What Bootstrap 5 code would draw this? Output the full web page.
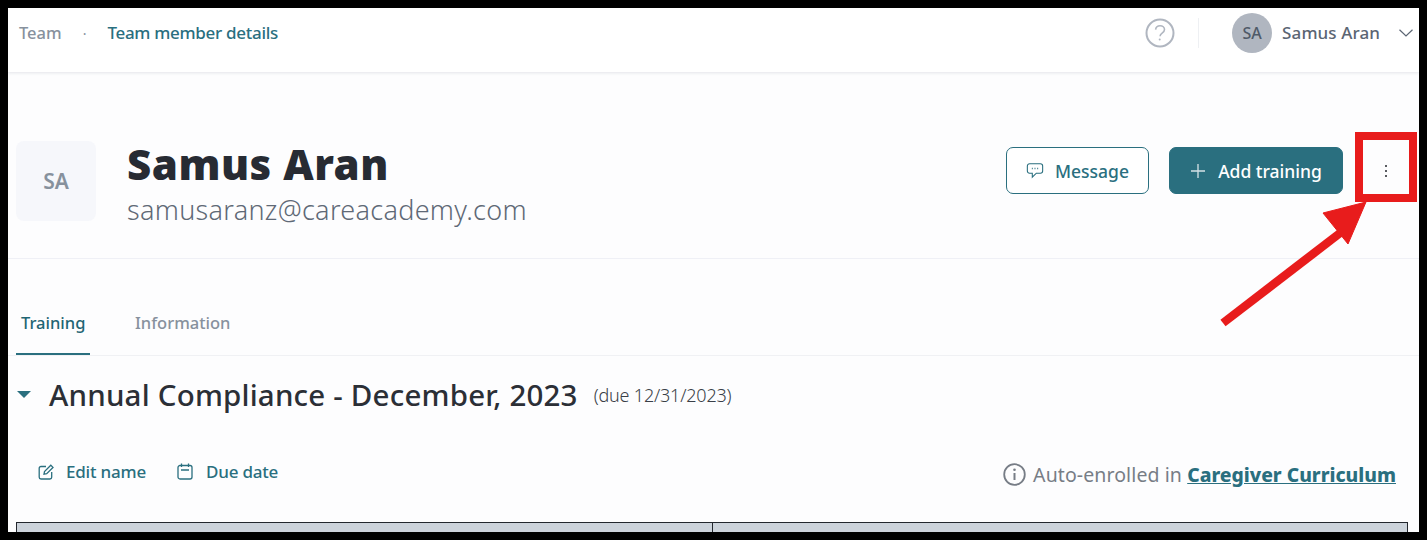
<!DOCTYPE html>
<html lang="en">
<head>
    <meta charset="UTF-8">
    <meta name="viewport" content="width=device-width, initial-scale=1">
    <title>Team member details</title>
    <link href="https://cdn.jsdelivr.net/npm/bootstrap@5.3.0/dist/css/bootstrap.min.css" rel="stylesheet">
    <style>
        html, body { height: 100%; overflow: hidden; }
        body { background: #000; padding: 8px; font-family: "Noto Sans", "Open Sans", sans-serif; color: #2b2f36; }
        .screen { position: relative; height: 524px; background: #fdfdfe; overflow: hidden; }
        .topbar { height: 64px; padding: 0 6px 14px 11px; background: #fff; box-shadow: 0 1px 3px rgba(40, 50, 80, .12); }
        .crumb-root { color: #87919d; font-size: 16.5px; font-weight: 500; }
        .crumb-dot { color: #87919d; font-size: 14px; margin: 0 21px 0 21px; }
        .crumb-here { color: #2a6f7f; font-size: 17px; font-weight: 500; letter-spacing: -.3px; }
        .help-wrap { padding-right: 23px; margin-right: 33px; border-right: 1px solid #eef0f3; height: 30px; }
        .user-circle { width: 40px; height: 40px; background: #b0b6c0; color: #4f5a68; font-size: 16px; font-weight: 500; }
        .user-name { color: #5b6573; font-size: 17px; font-weight: 500; margin: 0 19px 0 10px; letter-spacing: .1px; }
        .profile-head { height: 187px; padding: 69px 31px 0 8px; border-bottom: 1px solid #eff0f6; }
        .initials-box { width: 80px; height: 80px; background: #f6f7fb; color: #87919d; border-radius: 8px; font-size: 21px; font-weight: 600; margin-right: 31px; padding-top: 2px; }
        .member-name { font-size: 42px; font-weight: 900; line-height: 45px; margin: 0; color: #272b33; letter-spacing: .5px; }
        .member-mail { font-size: 27px; font-weight: 300; line-height: 40px; margin-top: 4px; color: #5f6976; letter-spacing: .3px; }
        .head-actions { height: 47px; margin-top: 6px; }
        .head-btn { height: 47px; font-size: 17.5px; font-weight: 500; border-radius: 7px; display: inline-flex; align-items: center; padding-top: 8px; }
        .head-btn svg { margin-top: -2px; }
        .btn-msg { width: 143px; color: #2a6f7f; background: #fff; border: 1px solid #2a6f7f; margin-right: 20px; }
        .btn-msg svg { margin-right: 3px; }
        .btn-msg:hover { color: #2a6f7f; background: #fff; border-color: #2a6f7f; }
        .btn-add { width: 174px; color: #fff; background: #2a6f7f; border: 1px solid #2a6f7f; }
        .btn-add:hover { color: #fff; background: #2a6f7f; border-color: #2a6f7f; }
        .kebab { width: 3px; margin-left: 42px; }
        .kebab span { display: block; width: 2px; height: 2px; background: #22262c; border-radius: 50%; margin: 3px 0; }
        .tab-strip { height: 97px; padding: 0 8px; border-bottom: 1px solid #f0f1f4; align-items: flex-end; }
        .tab-item { font-size: 16.5px; font-weight: 500; color: #87919d; height: 66px; padding-top: 24px; display: block; text-decoration: none; line-height: 1.2; border-bottom: 2px solid transparent; }
        .tab-on { color: #1f6573; width: 74px; padding-left: 5px; padding-right: 5px; border-bottom-color: #2a6f7f; }
        .tab-off { margin-left: 45px; }
        .section-head { padding: 17px 0 0 9px; height: 60px; }
        .caret-down { width: 0; height: 0; border-left: 7px solid transparent; border-right: 7px solid transparent; border-top: 7px solid #2a6f7f; margin-right: 18px; margin-top: -1px; }
        .section-title { font-size: 29.5px; font-weight: 500; line-height: 38px; margin: 0; color: #2b2f36; letter-spacing: .2px; }
        .section-due { font-size: 18px; font-weight: 300; color: #3a3f47; margin-left: 16px; margin-top: 1px; letter-spacing: -.2px; }
        .action-row { height: 106px; padding: 43px 23px 0 30px; }
        .act-link { color: #2a6f7f; font-size: 17px; font-weight: 500; text-decoration: none; display: inline-flex; align-items: center; letter-spacing: -.2px; }
        .act-link svg { margin-right: 12px; }
        .act-two { margin-left: 31px; }
        .act-two svg { margin-right: 13px; }
        .enrolled { color: #777d86; font-size: 19.5px; margin-top: 1px; letter-spacing: .1px; }
        .enrolled a { color: #2a6f7f; font-weight: 800; font-size: 19.3px; letter-spacing: 0; }
        .enrolled svg { margin-right: 7px; }
        .grid-wrap { padding: 0 11px 0 8px; }
        .grid-wrap .table { margin: 0; }
        .grid-wrap th { background: #ccd3db; height: 40px; width: 50%; border: 1px solid #23272e; padding: 0; }
        .note-box { position: absolute; left: 1347px; top: 124px; width: 62px; height: 70px; border: 8px solid #e81c1c; }
        .note-arrow { position: absolute; left: 1205px; top: 192px; }
    </style>
</head>
<body>
    <div class="screen">
        <header class="topbar d-flex align-items-center justify-content-between">
            <div class="d-flex align-items-center">
                <span class="crumb-root">Team</span>
                <span class="crumb-dot">·</span>
                <span class="crumb-here">Team member details</span>
            </div>
            <div class="d-flex align-items-center">
                <div class="help-wrap d-flex align-items-center">
                    <svg width="30" height="30" viewBox="0 0 30 30" fill="none" stroke="#b0b6c0">
                        <circle cx="15" cy="15" r="13.5" stroke-width="2"/>
                        <path d="M10.6 11.6c.3-2.5 2.2-3.9 4.5-3.9 2.5 0 4.4 1.6 4.4 3.8 0 1.800-1.100 2.700-2.400 3.600-1.300.9-2 1.600-2 3.100" stroke-width="1.600"/>
                        <circle cx="14.700" cy="21.500" r="1" fill="#b0b6c0" stroke="none"/>
                    </svg>
                </div>
                <div class="user-circle rounded-circle d-flex align-items-center justify-content-center">SA</div>
                <span class="user-name">Samus Aran</span>
                <svg width="14" height="8" viewBox="0 0 14 8" fill="none" stroke="#5b6573" stroke-width="1.200"><path d="M.5.8 7 7l6.500-6.200"/></svg>
            </div>
        </header>

        <section class="profile-head d-flex justify-content-between">
            <div class="d-flex">
                <div class="initials-box d-flex align-items-center justify-content-center">SA</div>
                <div>
                    <h1 class="member-name">Samus Aran</h1>
                    <div class="member-mail">samusaranz@careacademy.com</div>
                </div>
            </div>
            <div class="head-actions d-flex align-items-center">
                <button class="btn head-btn btn-msg justify-content-center gap-2" type="button">
                    <svg width="18" height="17" viewBox="0 0 20 18" fill="none" stroke="#2a6f7f" stroke-width="1.200">
                        <path d="M4 1.500h12c1.400 0 2.500 1.100 2.500 2.500v5.500c0 1.400-1.100 2.500-2.500 2.500h-4.500L7 16.500V12H4c-1.400 0-2.500-1.100-2.500-2.500V4C1.500 2.600 2.600 1.500 4 1.500z"/>
                        <path d="M6.500 6.800h1M9.500 6.800h1M12.500 6.800h1" stroke-width="1.500"/>
                    </svg>
                    Message
                </button>
                <button class="btn head-btn btn-add justify-content-center gap-2" type="button">
                    <svg class="me-1" width="16" height="16" viewBox="0 0 16 16" fill="none" stroke="#d5e2e6" stroke-width="1.300"><path d="M8 1v14M1 8h14"/></svg>
                    Add training
                </button>
                <div class="kebab"><span></span><span></span><span></span></div>
            </div>
        </section>

        <nav class="tab-strip d-flex">
            <a class="tab-item tab-on" href="#">Training</a>
            <a class="tab-item tab-off" href="#">Information</a>
        </nav>

        <div class="section-head d-flex align-items-center">
            <span class="caret-down"></span>
            <h2 class="section-title">Annual Compliance - December, 2023</h2>
            <span class="section-due">(due 12/31/2023)</span>
        </div>

        <div class="action-row d-flex justify-content-between align-items-start">
            <div class="d-flex">
                <a class="act-link" href="#">
                    <svg width="16" height="16" viewBox="0 0 16 16" fill="none" stroke="#2a6f7f" stroke-width="1.300">
                        <path d="M8 2.500H3c-1 0-1.800.8-1.800 1.800v8.900c0 1 .8 1.800 1.800 1.800h8.900c1 0 1.800-.8 1.800-1.800V8"/>
                        <path d="M6 10.200l.5-2.700 6.300-6.300 2.200 2.200-6.300 6.300z"/>
                    </svg>
                    Edit name
                </a>
                <a class="act-link act-two" href="#">
                    <svg width="16" height="17" viewBox="0 0 16 17" fill="none" stroke="#2a6f7f" stroke-width="1.300">
                        <rect x="1" y="2.500" width="14" height="13.500" rx="2"/>
                        <path d="M4.500.5v3.500M11.500.5v3.500M4 7h8"/>
                    </svg>
                    Due date
                </a>
            </div>
            <div class="enrolled d-flex align-items-center">
                <svg width="23" height="23" viewBox="0 0 23 23" fill="none" stroke="#777d86" stroke-width="1.800">
                    <circle cx="11.500" cy="11.500" r="10.300"/>
                    <path d="M11.500 10v7" stroke-width="2"/>
                    <circle cx="11.500" cy="6.800" r="1.300" fill="#777d86" stroke="none"/>
                </svg>
                <span>Auto-enrolled in <a href="#">Caregiver Curriculum</a></span>
            </div>
        </div>

        <div class="grid-wrap">
            <table class="table">
                <thead><tr><th></th><th></th></tr></thead>
            </table>
        </div>

        <div class="note-box"></div>
        <svg class="note-arrow" width="170" height="135" viewBox="0 0 170 135">
            <path d="M10 123 L131 30" stroke="#e81c1c" stroke-width="8.500" fill="none"/>
            <path d="M153 2 L110 13 L135 44 Z" fill="#e81c1c" stroke="#e81c1c"/>
        </svg>
    </div>
    <script src="https://cdn.jsdelivr.net/npm/bootstrap@5.3.0/dist/js/bootstrap.bundle.min.js"></script>
</body>
</html>
